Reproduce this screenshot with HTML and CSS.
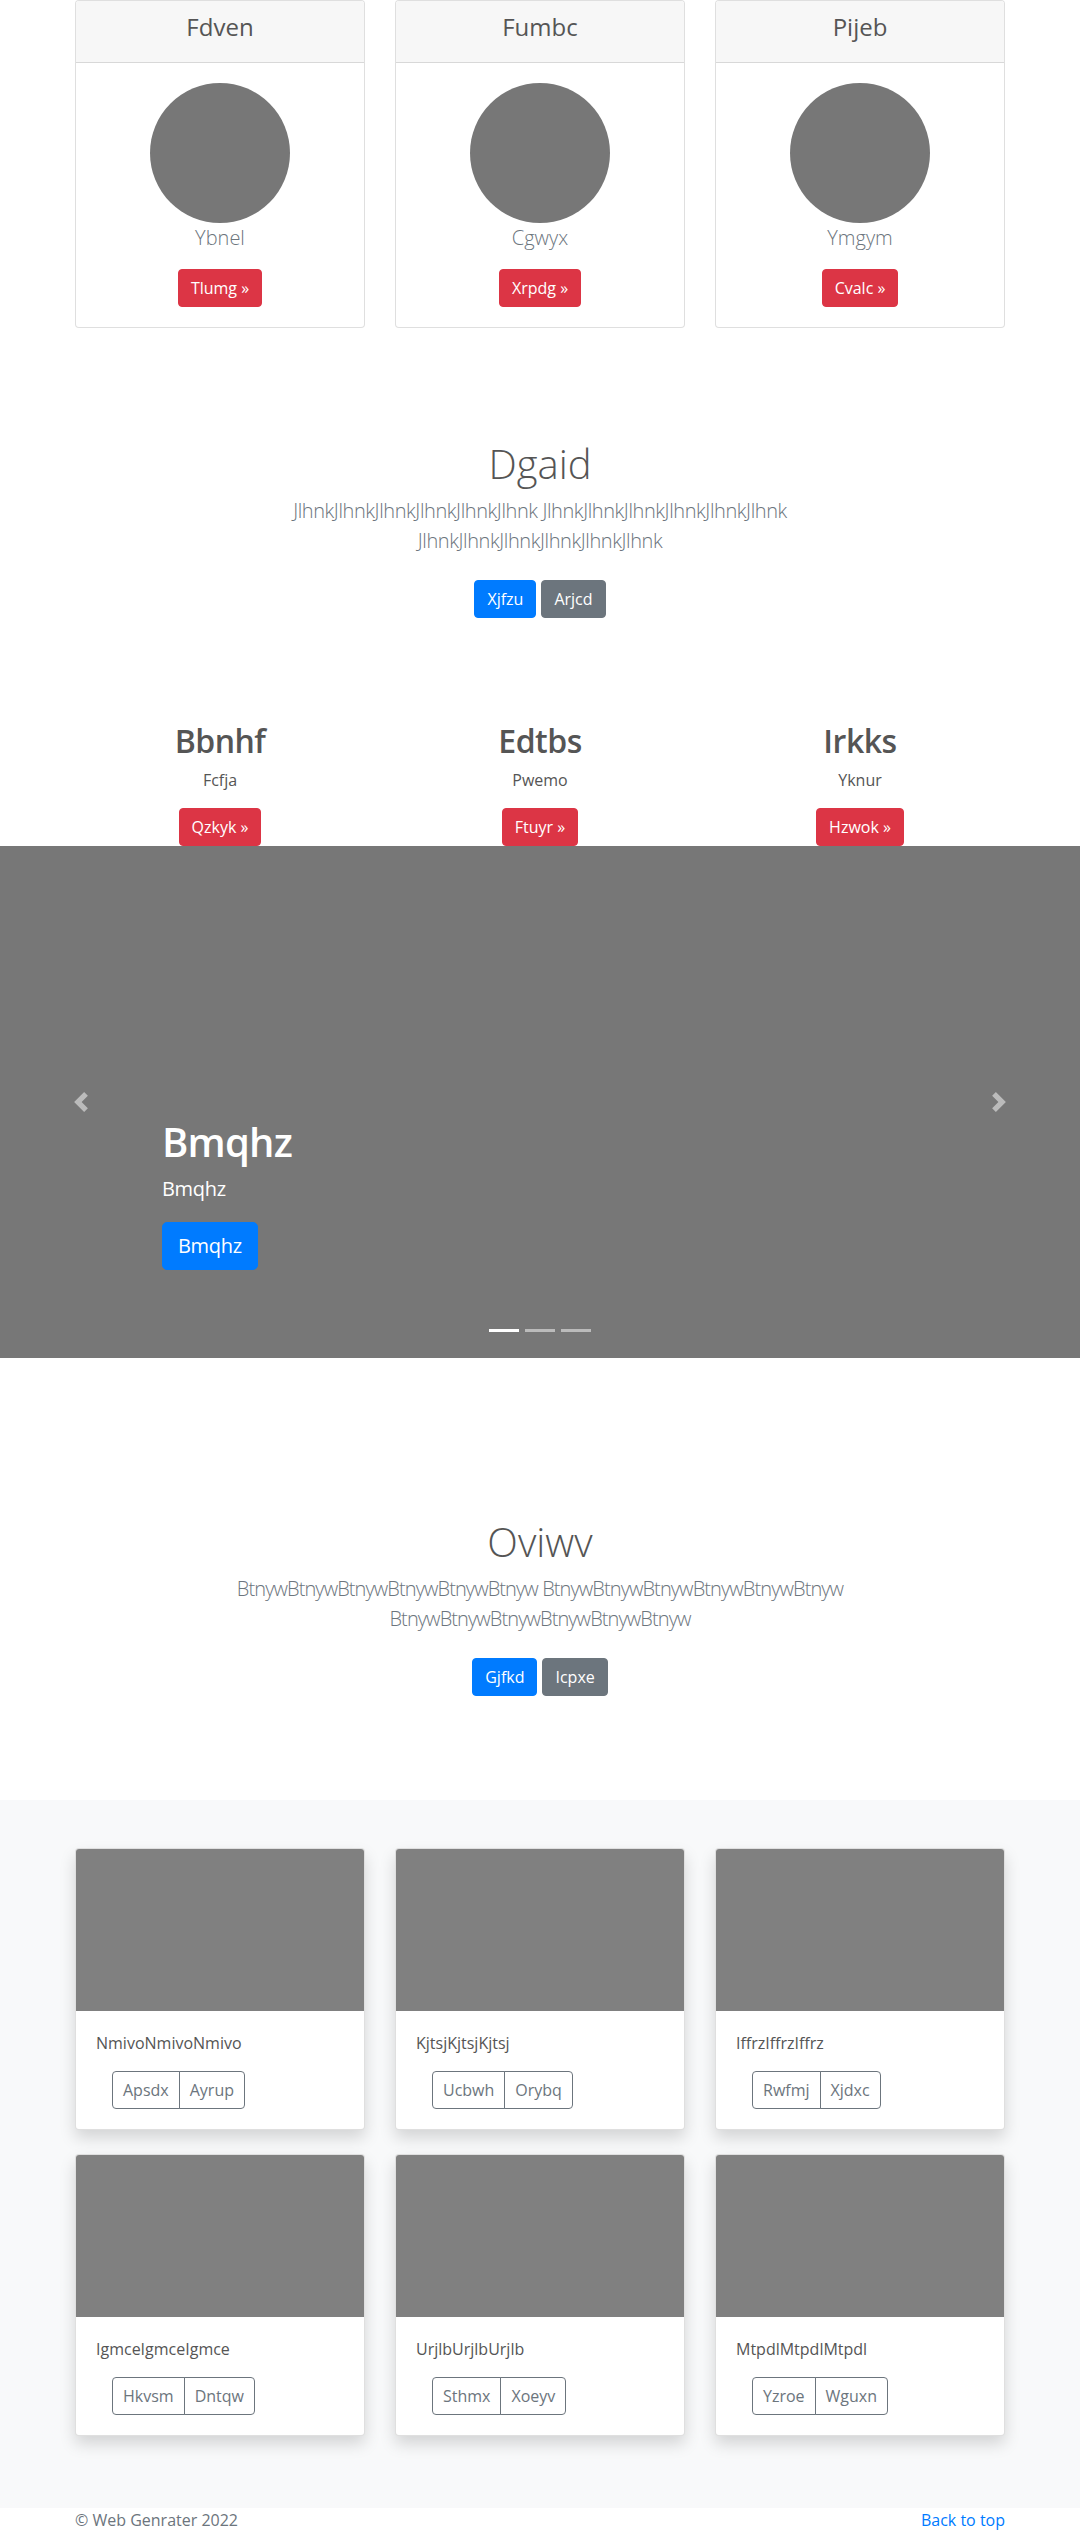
FILE: index.html
```html
<!DOCTYPE html>
<html lang="en">
<head>
<meta charset="utf-8">
<title>Page</title>
<link rel="stylesheet" href="styles.css">
</head>
<body>
<section class="pricing">
  <div class="container grid3">
    <div class="pcard">
      <div class="pcard-header"><h4>Fdven</h4></div>
      <div class="pcard-body">
        <div class="avatar"></div>
        <p class="lead muted">Ybnel</p>
        <a class="btn btn-danger" href="#">Tlumg »</a>
      </div>
    </div>
    <div class="pcard">
      <div class="pcard-header"><h4>Fumbc</h4></div>
      <div class="pcard-body">
        <div class="avatar"></div>
        <p class="lead muted">Cgwyx</p>
        <a class="btn btn-danger" href="#">Xrpdg »</a>
      </div>
    </div>
    <div class="pcard">
      <div class="pcard-header"><h4>Pijeb</h4></div>
      <div class="pcard-body">
        <div class="avatar"></div>
        <p class="lead muted">Ymgym</p>
        <a class="btn btn-danger" href="#">Cvalc »</a>
      </div>
    </div>
  </div>
</section>

<section class="jumbotron">
  <div class="jumbo-inner">
    <h1 class="jumbo-heading">Dgaid</h1>
    <p class="lead muted tight">JlhnkJlhnkJlhnkJlhnkJlhnkJlhnk JlhnkJlhnkJlhnkJlhnkJlhnkJlhnk JlhnkJlhnkJlhnkJlhnkJlhnkJlhnk</p>
    <div class="jumbo-actions">
      <a class="btn btn-primary" href="#">Xjfzu</a>
      <a class="btn btn-secondary" href="#">Arjcd</a>
    </div>
  </div>
</section>

<section class="marketing">
  <div class="container grid3">
    <div class="mcol">
      <h2>Bbnhf</h2>
      <p>Fcfja</p>
      <a class="btn btn-danger" href="#">Qzkyk »</a>
    </div>
    <div class="mcol">
      <h2>Edtbs</h2>
      <p>Pwemo</p>
      <a class="btn btn-danger" href="#">Ftuyr »</a>
    </div>
    <div class="mcol">
      <h2>Irkks</h2>
      <p>Yknur</p>
      <a class="btn btn-danger" href="#">Hzwok »</a>
    </div>
  </div>
</section>

<section class="carousel">
  <div class="carousel-caption">
    <h1>Bmqhz</h1>
    <p>Bmqhz</p>
    <a class="btn btn-primary btn-lg" href="#">Bmqhz</a>
  </div>
  <a class="carousel-control prev" href="#">
    <svg width="20" height="20" viewBox="0 0 8 8"><path fill="#fff" d="M5.25 0l-4 4 4 4 1.5-1.5L4.25 4l2.5-2.5L5.25 0z"/></svg>
  </a>
  <a class="carousel-control next" href="#">
    <svg width="20" height="20" viewBox="0 0 8 8"><path fill="#fff" d="M2.75 0l-1.5 1.5L3.75 4l-2.5 2.5L2.75 8l4-4-4-4z"/></svg>
  </a>
  <ol class="indicators">
    <li class="active"></li>
    <li></li>
    <li></li>
  </ol>
</section>

<section class="jumbotron">
  <div class="jumbo-inner">
    <h1 class="jumbo-heading">Oviwv</h1>
    <p class="lead muted tighter">BtnywBtnywBtnywBtnywBtnywBtnyw BtnywBtnywBtnywBtnywBtnywBtnyw BtnywBtnywBtnywBtnywBtnywBtnyw</p>
    <div class="jumbo-actions">
      <a class="btn btn-primary" href="#">Gjfkd</a>
      <a class="btn btn-secondary" href="#">Icpxe</a>
    </div>
  </div>
</section>

<section class="album">
  <div class="container grid3 album-grid">
    <div class="acard">
      <div class="acard-img"></div>
      <div class="acard-body">
        <p>NmivoNmivoNmivo</p>
        <div class="btn-group"><a class="btn btn-outline" href="#">Apsdx</a><a class="btn btn-outline" href="#">Ayrup</a></div>
      </div>
    </div>
    <div class="acard">
      <div class="acard-img"></div>
      <div class="acard-body">
        <p>KjtsjKjtsjKjtsj</p>
        <div class="btn-group"><a class="btn btn-outline" href="#">Ucbwh</a><a class="btn btn-outline" href="#">Orybq</a></div>
      </div>
    </div>
    <div class="acard">
      <div class="acard-img"></div>
      <div class="acard-body">
        <p>IffrzIffrzIffrz</p>
        <div class="btn-group"><a class="btn btn-outline" href="#">Rwfmj</a><a class="btn btn-outline" href="#">Xjdxc</a></div>
      </div>
    </div>
    <div class="acard">
      <div class="acard-img"></div>
      <div class="acard-body">
        <p>IgmceIgmceIgmce</p>
        <div class="btn-group"><a class="btn btn-outline" href="#">Hkvsm</a><a class="btn btn-outline" href="#">Dntqw</a></div>
      </div>
    </div>
    <div class="acard">
      <div class="acard-img"></div>
      <div class="acard-body">
        <p>UrjlbUrjlbUrjlb</p>
        <div class="btn-group"><a class="btn btn-outline" href="#">Sthmx</a><a class="btn btn-outline" href="#">Xoeyv</a></div>
      </div>
    </div>
    <div class="acard">
      <div class="acard-img"></div>
      <div class="acard-body">
        <p>MtpdlMtpdlMtpdl</p>
        <div class="btn-group"><a class="btn btn-outline" href="#">Yzroe</a><a class="btn btn-outline" href="#">Wguxn</a></div>
      </div>
    </div>
  </div>
</section>

<footer class="footer">
  <div class="container footer-row">
    <p>© Web Genrater 2022</p>
    <p><a href="#">Back to top</a></p>
  </div>
</footer>
</body>
</html>
```

FILE: styles.css
```css
* { box-sizing: border-box; }

body {
  margin: 0;
  font-family: "Segoe UI", "Open Sans", "Noto Sans", sans-serif;
  font-size: 16px;
  line-height: 1.5;
  color: #555;
  background: #fff;
}

p { margin: 0 0 16px; }
h1, h2, h4 { margin: 0 0 8px; line-height: 1.2; }

.container {
  width: 930px;
  margin: 0 auto;
}

.grid3 {
  display: grid;
  grid-template-columns: repeat(3, 290px);
  column-gap: 30px;
}

.lead { font-size: 20px; font-weight: 300; line-height: 30px; }
.muted { color: #6c757d; }
.tight { letter-spacing: -0.4px; }
.tighter { letter-spacing: -0.9px; }

/* buttons */
.btn {
  display: inline-block;
  font-size: 16px;
  line-height: 24px;
  padding: 6px 12px;
  border: 1px solid transparent;
  border-radius: 4px;
  color: #fff;
  text-decoration: none;
  white-space: nowrap;
}
.btn-danger { background: #dc3545; border-color: #dc3545; }
.btn-primary { background: #007bff; border-color: #007bff; }
.btn-secondary { background: #6c757d; border-color: #6c757d; }
.btn-lg { font-size: 20px; line-height: 30px; padding: 8px 15px; border-radius: 5px; letter-spacing: -0.3px; }

/* pricing */
.pricing { margin-bottom: 16px; }
.pcard {
  border: 1px solid rgba(0,0,0,.125);
  border-radius: 4px;
  background: #fff;
  text-align: center;
  overflow: hidden;
}
.pcard-header {
  background: #f7f7f7;
  border-bottom: 1px solid rgba(0,0,0,.125);
  padding: 12px 20px;
}
.pcard-header h4 {
  font-size: 24px;
  font-weight: 400;
}
.pcard-body {
  padding: 20px;
  display: flex;
  flex-direction: column;
  align-items: center;
}
.avatar {
  width: 140px;
  height: 140px;
  border-radius: 50%;
  background: #777;
}

/* jumbotron */
.jumbotron {
  padding: 96px 0;
  text-align: center;
  background: #fff;
}
.jumbo-inner {
  max-width: 720px;
  margin: 0 auto;
  padding: 0 15px;
}
.jumbo-heading {
  font-size: 40px;
  font-weight: 300;
}
.jumbo-actions {
  display: flex;
  justify-content: center;
  gap: 5px;
  padding: 8px 0;
}

/* marketing */
.marketing .container { width: 960px; grid-template-columns: repeat(3, 320px); column-gap: 0; }
.mcol { text-align: center; }
.mcol h2 { font-size: 32px; font-weight: 600; letter-spacing: -0.5px; }

/* carousel */
.carousel {
  position: relative;
  height: 512px;
  background: #777;
  margin-bottom: 64px;
  display: flex;
  flex-direction: column;
  justify-content: flex-end;
  padding: 0 0 88px 162px;
}
.carousel-caption { color: #fff; }
.carousel-caption h1 { font-size: 40px; font-weight: 600; letter-spacing: -0.8px; }
.carousel-caption p { font-size: 20px; line-height: 30px; letter-spacing: -0.3px; }
.carousel-caption .btn { margin-top: 2px; }
.carousel-control {
  position: absolute;
  top: 0;
  bottom: 0;
  width: 162px;
  display: flex;
  align-items: center;
  justify-content: center;
  opacity: .5;
}
.carousel-control.prev { left: 0; }
.carousel-control.next { right: 0; }
.indicators {
  position: absolute;
  left: 0;
  right: 0;
  bottom: 26px;
  margin: 0;
  padding: 0;
  list-style: none;
  display: flex;
  justify-content: center;
  gap: 6px;
}
.indicators li {
  width: 30px;
  height: 3px;
  background: #fff;
  opacity: .5;
}
.indicators li.active { opacity: 1; }

/* album */
.album {
  background: #f8f9fa;
  padding: 48px 0 72px;
}
.album-grid { row-gap: 24px; }
.acard {
  background: #fff;
  border: 1px solid rgba(0,0,0,.125);
  border-radius: 4px;
  overflow: hidden;
  box-shadow: 0 8px 16px rgba(0,0,0,.15);
}
.acard-img {
  height: 162px;
  background: #808080;
}
.acard-body { padding: 20px; }
.btn-group {
  display: inline-flex;
  margin-left: 16px;
}
.btn-outline {
  color: #6c757d;
  border-color: #6c757d;
  background: transparent;
  padding: 6px 10px;
  border-radius: 0;
}
.btn-outline:first-child { border-radius: 4px 0 0 4px; }
.btn-outline + .btn-outline { margin-left: -1px; border-radius: 0 4px 4px 0; }

/* footer */
.footer { color: #6c757d; }
.footer-row {
  display: flex;
  justify-content: space-between;
}
.footer-row p { margin: 0; }
.footer a { color: #007bff; text-decoration: none; }
```
